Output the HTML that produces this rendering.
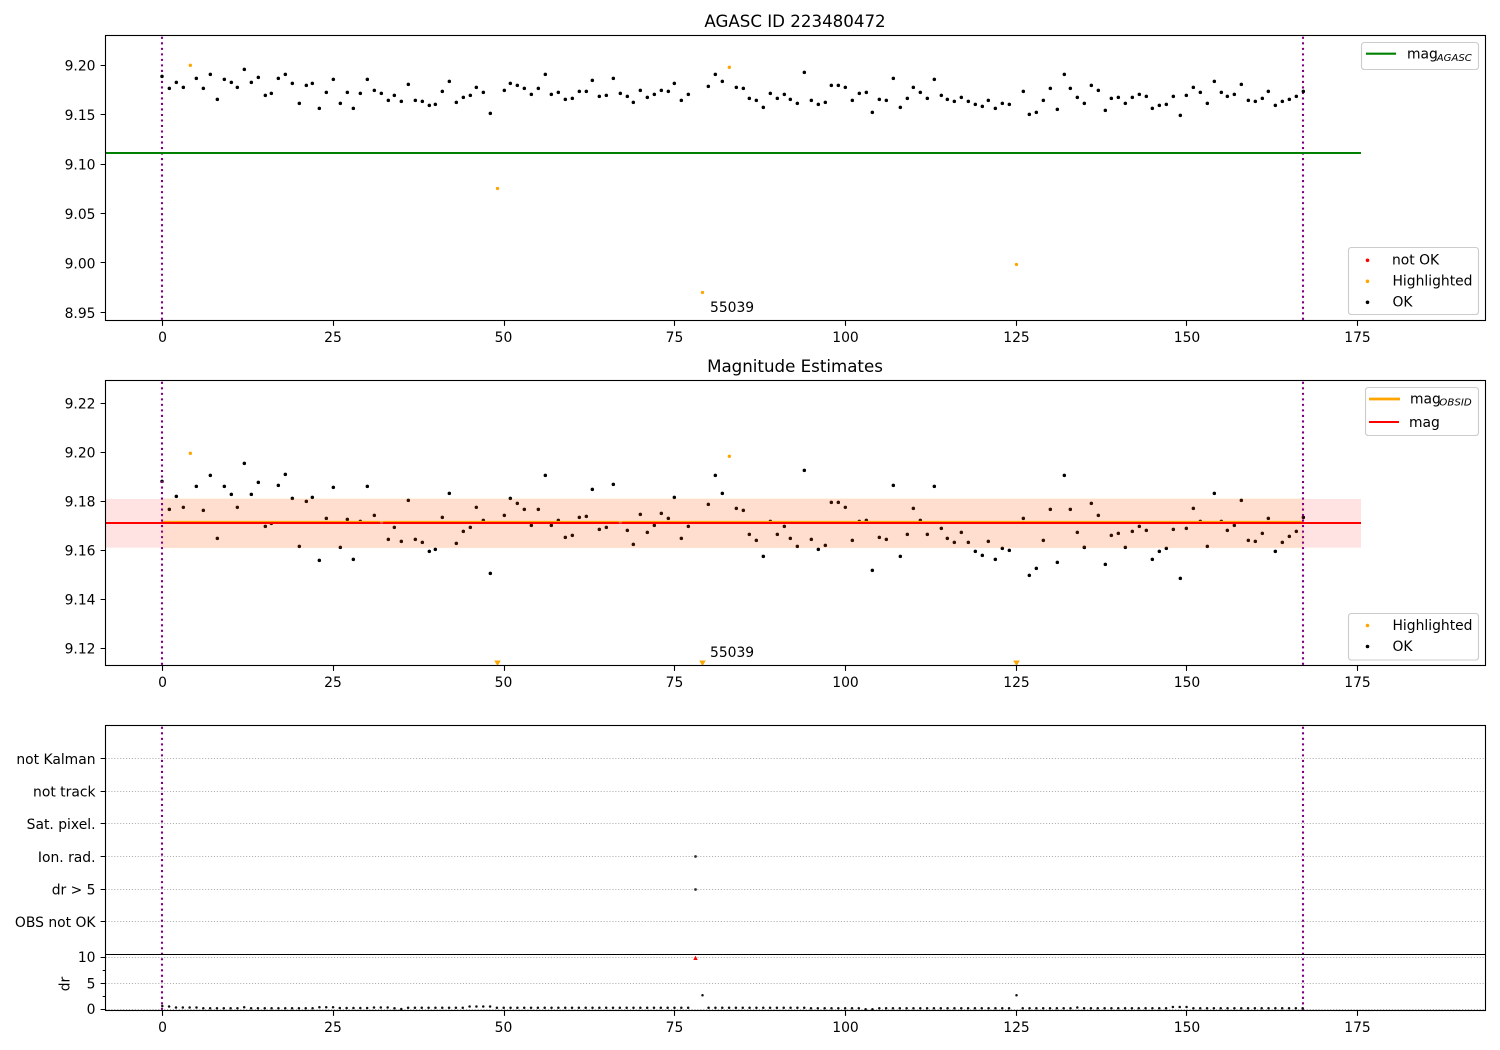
<!DOCTYPE html>
<html><head><meta charset="utf-8"><title>AGASC ID 223480472</title>
<style>html,body{margin:0;padding:0;background:#fff}svg{display:block}
text{font-family:"DejaVu Sans","Liberation Sans",sans-serif;font-size:13.89px;fill:#000}
.r{text-anchor:end}.c{text-anchor:middle}.t{font-size:16.67px}.s{font-size:10px;font-style:italic}
.k{fill:none;stroke:#000;stroke-linecap:round;stroke-width:10.5}
.o{fill:none;stroke:#ffa500;stroke-linecap:round;stroke-width:10}
.tk{stroke:#000;stroke-width:1.1;fill:none}.sp{fill:none;stroke:#000;stroke-width:1.11}
.pu{stroke:#800080;stroke-width:2.08;stroke-dasharray:2.08 3.43;fill:none}
.gr{stroke:#b0b0b0;stroke-width:1.1;stroke-dasharray:1.1 1.83;fill:none}
.lg{fill:#fff;fill-opacity:.8;stroke:#ccc;stroke-width:1.1}
</style></head><body>
<svg width="1500" height="1050" viewBox="0 0 1500 1050" xmlns="http://www.w3.org/2000/svg">
<rect width="1500" height="1050" fill="#fff"/>

<!-- PANEL 1 -->
<text class="t c" x="795" y="27">AGASC ID 223480472</text>
<path class="pu" d="M162 36.800V320.500M1303 36.800V320.500"/>
<path d="M105.500 153H1361" stroke="#008000" stroke-width="2.08" fill="none"/>
<g transform="translate(100 30) scale(.33333)"><path class="k" d="M186 139h0M208 175h0M229 157h0M250 172h0M289 145h0M310 175h0M331 133h0M352 208h0M373 148h0M394 157h0M412 172h0M433 118h0M454 157h0M475 142h0M496 196h0M514 190h0M535 145h0M556 133h0M577 160h0M598 220h0M619 166h0M637 160h0M658 235h0M679 187h0M700 148h0M721 220h0M742 187h0M760 235h0M781 190h0M802 148h0M823 181h0M844 190h0M865 211h0M883 196h0M904 214h0M925 163h0M946 211h0M967 214h0M988 226h0M1006 223h0M1027 184h0M1048 154h0M1069 217h0M1090 202h0M1111 196h0M1129 172h0M1150 187h0M1171 250h0M1213 181h0M1231 160h0M1252 166h0M1273 175h0M1294 193h0M1315 175h0M1336 133h0M1354 193h0M1375 187h0M1396 208h0M1417 205h0M1438 184h0M1459 184h0"/><path class="o" d="M271 106h0"/></g>
<g transform="translate(590 30) scale(.33333)"><path class="k" d="M7 151h0M28 199h0M49 196h0M70 145h0M91 190h0M112 199h0M130 217h0M151 181h0M172 202h0M193 193h0M214 181h0M235 184h0M253 160h0M274 211h0M295 193h0M355 169h0M376 133h0M397 154h0M439 172h0M460 175h0M478 205h0M499 211h0M520 232h0M541 190h0M562 205h0M583 193h0M601 208h0M622 220h0M643 127h0M664 211h0M685 223h0M706 217h0M724 166h0M745 166h0M766 172h0M787 211h0M808 190h0M829 187h0M847 247h0M868 208h0M889 211h0M910 145h0M931 232h0M952 205h0M970 172h0M991 187h0M1012 205h0M1033 148h0M1054 196h0M1072 208h0M1093 214h0M1114 202h0M1135 214h0M1156 223h0M1177 229h0M1195 211h0M1216 235h0M1237 220h0M1258 223h0M1300 184h0M1318 253h0M1339 247h0M1360 211h0M1381 175h0M1402 238h0M1423 133h0M1441 175h0M1462 202h0M1483 220h0"/><path class="o" d="M418 112h0"/></g>
<g transform="translate(1000 30) scale(.33333)"><path class="k" d="M274 166h0M295 181h0M316 241h0M334 205h0M355 202h0M376 220h0M397 202h0M418 193h0M439 199h0M457 235h0M478 226h0M499 223h0M520 199h0M541 256h0M559 196h0M580 172h0M601 187h0M622 220h0M643 154h0M664 187h0M682 199h0M703 193h0M724 163h0M745 211h0M766 214h0M787 205h0M805 184h0M826 226h0M847 214h0M868 208h0M889 199h0M910 184h0"/></g>
<path d="M497.500 188.500h0M1016.500 264.500h0M702.500 292.500h0" stroke="#ffa500" stroke-width="3.3" stroke-linecap="round" fill="none"/>
<text x="710" y="312">55039</text>
<rect class="sp" x="105.500" y="35.500" width="1380" height="285"/>
<path class="tk" d="M162.500 320.500v5.400M333.500 320.500v5.400M504.500 320.500v5.400M674.500 320.500v5.400M845.500 320.500v5.400M1016.500 320.500v5.400M1186.500 320.500v5.400M1357.500 320.500v5.400M105.500 65.500h-4.900M105.500 114.500h-4.900M105.500 164.500h-4.900M105.500 213.500h-4.900M105.500 262.500h-4.900M105.500 312.500h-4.900"/>
<text class="c" x="162.500" y="342">0</text><text class="c" x="333" y="342">25</text><text class="c" x="503.500" y="342">50</text><text class="c" x="674.500" y="342">75</text><text class="c" x="845.500" y="342">100</text><text class="c" x="1016.500" y="342">125</text><text class="c" x="1187" y="342">150</text><text class="c" x="1357.500" y="342">175</text>
<text class="r" x="95.500" y="70.500">9.20</text><text class="r" x="95.500" y="120">9.15</text><text class="r" x="95.500" y="169.500">9.10</text><text class="r" x="95.500" y="219">9.05</text><text class="r" x="95.500" y="268.500">9.00</text><text class="r" x="95.500" y="318">8.95</text>
<rect class="lg" x="1361.500" y="42.500" width="117" height="27" rx="2.800"/>
<path d="M1366 53.700h30" stroke="#008000" stroke-width="2.080"/>
<text x="1407" y="58.500">mag</text><text class="s" x="1436.800" y="60.800" textLength="35" lengthAdjust="spacingAndGlyphs">AGASC</text>
<rect class="lg" x="1348.500" y="247.500" width="130" height="67" rx="2.800"/>
<circle cx="1367.500" cy="260.300" r="1.800" fill="#f00"/><circle cx="1367.500" cy="281.300" r="1.800" fill="#ffa500"/><circle cx="1367.500" cy="302.300" r="1.800" fill="#000"/>
<text x="1392" y="264.500">not OK</text><text x="1392.500" y="285.500">Highlighted</text><text x="1392.500" y="306.500">OK</text>

<!-- PANEL 2 -->
<text class="t c" x="795" y="372">Magnitude Estimates</text>
<g transform="translate(100 440) scale(.33333)"><path class="k" d="M186 124h0M208 208h0M229 169h0M250 202h0M289 139h0M310 211h0M331 106h0M352 295h0M373 139h0M394 163h0M412 202h0M433 70h0M454 163h0M475 127h0M496 259h0M514 250h0M535 136h0M556 103h0M577 175h0M598 319h0M619 184h0M637 172h0M658 361h0M679 235h0M700 142h0M721 322h0M742 238h0M760 358h0M781 244h0M802 139h0M823 226h0M865 298h0M883 262h0M904 304h0M925 181h0M946 298h0M967 307h0M988 334h0M1006 328h0M1027 232h0M1048 160h0M1069 310h0M1090 274h0M1111 262h0M1129 202h0M1150 241h0M1171 400h0M1213 226h0M1231 175h0M1252 190h0M1273 208h0M1294 256h0M1315 208h0M1336 106h0M1354 256h0M1375 241h0M1396 292h0M1417 286h0M1438 232h0M1459 229h0"/><path class="o" d="M271 40h0"/></g>
<g transform="translate(590 440) scale(.33333)"><path class="k" d="M7 148h0M28 268h0M49 262h0M70 133h0M112 271h0M130 313h0M151 223h0M172 277h0M193 256h0M214 220h0M235 235h0M253 172h0M274 295h0M295 259h0M355 193h0M376 106h0M397 160h0M439 205h0M460 211h0M478 283h0M499 301h0M520 349h0M541 244h0M562 283h0M583 259h0M601 295h0M622 319h0M643 91h0M664 298h0M685 328h0M706 316h0M724 187h0M745 187h0M766 202h0M787 301h0M808 244h0M829 241h0M847 391h0M868 292h0M889 298h0M910 136h0M931 349h0M952 283h0M970 205h0M991 241h0M1012 283h0M1033 139h0M1054 265h0M1072 295h0M1093 307h0M1114 277h0M1135 307h0M1156 334h0M1177 346h0M1195 304h0M1216 358h0M1237 325h0M1258 331h0M1300 235h0M1318 406h0M1339 385h0M1360 301h0M1381 208h0M1402 367h0M1423 106h0M1441 208h0M1462 277h0M1483 322h0"/><path class="o" d="M418 49h0"/></g>
<g transform="translate(1000 440) scale(.33333)"><path class="k" d="M253 322h0M274 190h0M295 226h0M316 373h0M334 286h0M355 280h0M376 322h0M397 274h0M418 259h0M439 271h0M457 358h0M478 334h0M499 325h0M520 268h0M541 415h0M559 265h0M580 205h0M601 244h0M622 319h0M643 160h0M664 244h0M682 271h0M703 256h0M724 181h0M745 301h0M766 304h0M787 280h0M805 235h0M826 334h0M847 307h0M868 289h0M889 274h0M910 232h0"/></g>
<rect x="105.500" y="499" width="1255.500" height="48.700" fill="#ff0000" fill-opacity=".11"/>
<rect x="162" y="498.600" width="1141" height="49" fill="#ffa500" fill-opacity=".085" stroke="#ffa500" stroke-opacity=".08" stroke-width="1"/>
<path d="M162 521.900H1303" stroke="#ffa500" stroke-width="2.080" fill="none"/>
<path d="M105.500 523H1361" stroke="#f00" stroke-width="2" fill="none"/>
<path d="M381.500 522h0M620.300 522h0" stroke="#ffe0d0" stroke-opacity=".35" stroke-width="3.500" stroke-linecap="round" fill="none"/>
<path class="pu" d="M162 381.800V665.500M1303 381.800V665.500"/>
<path d="M494.200 660.500h6.600l-3.300 5.500zM699.200 660.500h6.600l-3.300 5.500zM1013.200 660.500h6.600l-3.300 5.500z" fill="#ffa500"/>
<text x="710" y="657">55039</text>
<rect class="sp" x="105.500" y="380.500" width="1380" height="285"/>
<path class="tk" d="M162.500 665.500v5.400M333.500 665.500v5.400M504.500 665.500v5.400M674.500 665.500v5.400M845.500 665.500v5.400M1016.500 665.500v5.400M1186.500 665.500v5.400M1357.500 665.500v5.400M105.500 403.500h-4.900M105.500 452.500h-4.900M105.500 501.500h-4.900M105.500 550.500h-4.900M105.500 599.500h-4.900M105.500 648.500h-4.900"/>
<text class="c" x="162.500" y="687">0</text><text class="c" x="333" y="687">25</text><text class="c" x="503.500" y="687">50</text><text class="c" x="674.500" y="687">75</text><text class="c" x="845.500" y="687">100</text><text class="c" x="1016.500" y="687">125</text><text class="c" x="1187" y="687">150</text><text class="c" x="1357.500" y="687">175</text>
<text class="r" x="95.500" y="408.500">9.22</text><text class="r" x="95.500" y="457.500">9.20</text><text class="r" x="95.500" y="506.500">9.18</text><text class="r" x="95.500" y="555.500">9.16</text><text class="r" x="95.500" y="604.500">9.14</text><text class="r" x="95.500" y="653.500">9.12</text>
<rect class="lg" x="1365.500" y="387.500" width="113" height="48" rx="2.800"/>
<path d="M1369 399h31" stroke="#ffa500" stroke-width="2.800"/><path d="M1369 422h30" stroke="#f00" stroke-width="2.080"/>
<text x="1410" y="403.500">mag</text><text class="s" x="1439.300" y="405.500" textLength="32.400" lengthAdjust="spacingAndGlyphs">OBSID</text><text x="1409" y="427">mag</text>
<rect class="lg" x="1348.500" y="613.500" width="130" height="46.500" rx="2.800"/>
<circle cx="1367.500" cy="625.500" r="1.800" fill="#ffa500"/><circle cx="1367.500" cy="646.500" r="1.800" fill="#000"/>
<text x="1392.500" y="630">Highlighted</text><text x="1392.500" y="651">OK</text>

<!-- PANEL 3 -->
<path class="gr" d="M105.500 758.500H1485M105.500 791.500H1485M105.500 823.500H1485M105.500 856.500H1485M105.500 889.500H1485M105.500 921.500H1485M105.500 957.500H1485M105.500 983.500H1485M105.500 1009.500H1485"/>
<path class="pu" d="M162 726.800V1010.500M1303 726.800V1010.500"/>
<circle cx="695.500" cy="856.500" r="1.400" fill="#333"/><circle cx="695.500" cy="889.500" r="1.400" fill="#333"/>
<path d="M693.300 960h4.400l-2.200-4.400z" fill="#f00"/>
<path fill="none" stroke="#111" stroke-width="2.500" stroke-linecap="round" d="M162.300 1006h0M169.100 1006.500h0M176 1007.500h0m6.830 0h0m6.830 0h0m6.830 0h0M203.300 1008.300h0m6.830 0h0m6.830 0h0m6.830 0h0m6.830 0h0m6.830 0h0M244.200 1007.300h0M251.100 1008.300h0m6.830 0h0m6.830 0h0m6.830 0h0m6.830 0h0m6.830 0h0m6.830 0h0m6.830 0h0m6.830 0h0m6.830 0h0M319.400 1007.300h0m6.830 0h0m6.830 0h0M339.800 1008h0m6.830 0h0m6.830 0h0m6.830 0h0m6.830 0h0M374 1007.500h0m6.830 0h0m6.830 0h0M394.500 1008.300h0M401.300 1009h0M408.100 1007.700h0m6.830 0h0m6.830 0h0m6.830 0h0m6.830 0h0m6.830 0h0m6.830 0h0m6.830 0h0m6.830 0h0M469.600 1006.500h0m6.830 0h0m6.830 0h0m6.830 0h0M496.900 1007.800h0m6.830 0h0m6.830 0h0m6.830 0h0m6.830 0h0m6.830 0h0m6.830 0h0m6.830 0h0m6.830 0h0m6.830 0h0m6.830 0h0m6.830 0h0m6.830 0h0m6.830 0h0m6.830 0h0m6.830 0h0m6.830 0h0m6.830 0h0m6.830 0h0m6.830 0h0m6.830 0h0m6.830 0h0m6.830 0h0m6.830 0h0m6.830 0h0m6.830 0h0m6.830 0h0m6.830 0h0m6.830 0h0M708.600 1007.800h0m6.830 0h0m6.830 0h0m6.830 0h0m6.830 0h0m6.830 0h0m6.830 0h0m6.830 0h0m6.830 0h0m6.830 0h0m6.830 0h0m6.830 0h0m6.830 0h0m6.830 0h0m6.830 0h0M811 1008.300h0m6.830 0h0m6.830 0h0m6.830 0h0m6.830 0h0m6.830 0h0m6.830 0h0m6.830 0h0M865.600 1009.300h0m6.830 0h0M879.300 1008.300h0m6.830 0h0m6.830 0h0m6.830 0h0m6.830 0h0m6.830 0h0m6.830 0h0m6.830 0h0m6.830 0h0m6.830 0h0m6.830 0h0m6.830 0h0m6.830 0h0m6.830 0h0m6.830 0h0m6.830 0h0m6.830 0h0m6.830 0h0m6.830 0h0m6.830 0h0M1022.700 1008.300h0m6.830 0h0m6.830 0h0m6.830 0h0m6.830 0h0m6.830 0h0m6.830 0h0m6.830 0h0M1077.300 1007.500h0M1084.100 1008.300h0m6.830 0h0m6.830 0h0m6.830 0h0m6.830 0h0m6.830 0h0m6.830 0h0m6.830 0h0m6.830 0h0m6.830 0h0m6.830 0h0m6.830 0h0m6.830 0h0M1172.900 1007h0m6.830 0h0m6.830 0h0M1193.400 1008.200h0m6.830 0h0m6.830 0h0m6.830 0h0m6.830 0h0m6.830 0h0m6.830 0h0m6.830 0h0m6.830 0h0m6.830 0h0m6.830 0h0m6.830 0h0m6.830 0h0m6.830 0h0m6.830 0h0m6.830 0h0m6.830 0h0M702.500 995.300h0M1016.500 995.300h0"/>
<path d="M105.500 954.500H1485.500" stroke="#000" stroke-width="1.110" fill="none"/>
<rect class="sp" x="105.500" y="725.500" width="1380" height="285"/>
<path class="tk" d="M162.500 1010.500v5.400M333.500 1010.500v5.400M504.500 1010.500v5.400M674.500 1010.500v5.400M845.500 1010.500v5.400M1016.500 1010.500v5.400M1186.500 1010.500v5.400M1357.500 1010.500v5.400M105.500 758.500h-4.900M105.500 791.500h-4.900M105.500 823.500h-4.900M105.500 856.500h-4.900M105.500 889.500h-4.900M105.500 921.500h-4.900M105.500 957.500h-4.900M105.500 983.500h-4.900M105.500 1009.500h-4.900M105.500 970.500h-2.800M105.500 996.500h-2.800"/>
<text class="c" x="162.500" y="1032">0</text><text class="c" x="333" y="1032">25</text><text class="c" x="503.500" y="1032">50</text><text class="c" x="674.500" y="1032">75</text><text class="c" x="845.500" y="1032">100</text><text class="c" x="1016.500" y="1032">125</text><text class="c" x="1187" y="1032">150</text><text class="c" x="1357.500" y="1032">175</text>
<text class="r" x="95.500" y="764">not Kalman</text><text class="r" x="95.500" y="796.500">not track</text><text class="r" x="95.500" y="829">Sat. pixel.</text><text class="r" x="95.500" y="862">Ion. rad.</text><text class="r" x="95.500" y="894.500">dr &gt; 5</text><text class="r" x="95.500" y="927">OBS not OK</text>
<text class="r" x="95.500" y="962">10</text><text class="r" x="95.500" y="988.500">5</text><text class="r" x="95.500" y="1014">0</text>
<text class="c" transform="translate(69.500 984) rotate(-90)">dr</text>
</svg>
</body></html>
